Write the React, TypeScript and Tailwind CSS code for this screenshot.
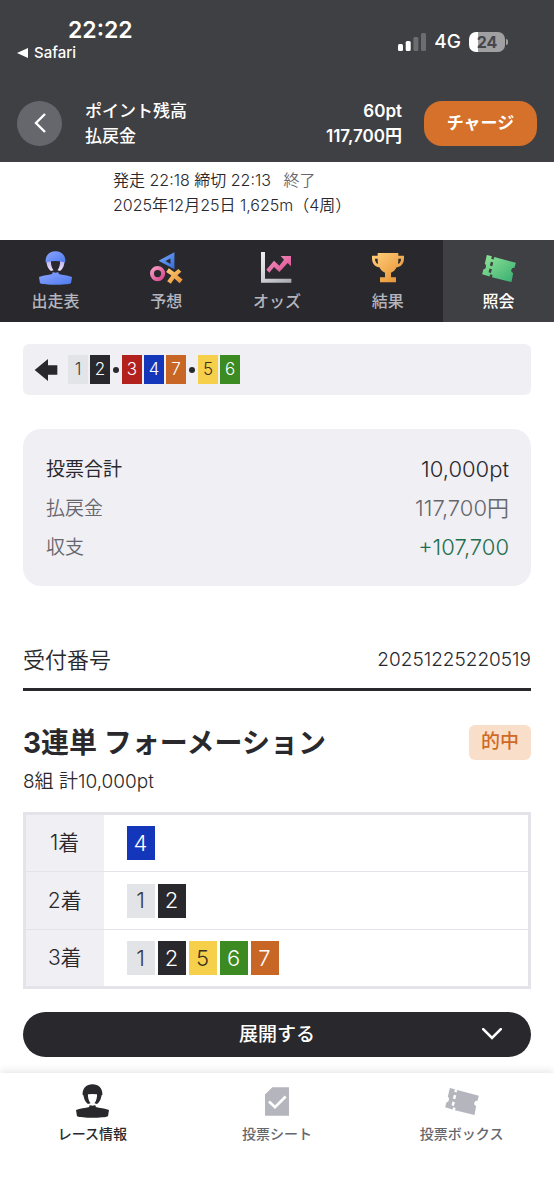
import React from "react";

const tileColors: Record<number, string> = {
  1: "bg-[#e3e4e8] text-[#3a3a3e]",
  2: "bg-[#29292d] text-white",
  3: "bg-[#b3211f] text-white",
  4: "bg-[#1436bb] text-white",
  5: "bg-[#f7d04b] text-[#3a3020]",
  6: "bg-[#3b8a22] text-white",
  7: "bg-[#c86626] text-white",
};

function Tile({ n, large }: { n: number; large?: boolean }) {
  const size = large ? "w-7 h-[34px] text-[22px]" : "w-5 h-[29px] text-[17px]";
  return (
    <span className={`flex items-center justify-center font-[350] ${size} ${tileColors[n]}`}>{n}</span>
  );
}

function Dot() {
  return <span className="mx-px size-1.5 rounded-full bg-[#29292d]" />;
}

function RiderIcon({ fill }: { fill: string }) {
  return (
    <svg viewBox="0 0 100 102" className="h-[34px] w-[33px]" aria-hidden="true">
      <path
        d="M22 28c1 14 5 25 14 32l8-2c-6-8-8-17-8-30zM78 28c-1 14-5 25-14 32l-8-2c6-8 8-17 8-30z"
        fill={fill === "url(#rider)" ? "url(#strap)" : fill}
      />
      <path d="M20 32C19 12 32 0 50 0s31 12 30 32c-1 2-4 2-6 1-16-4-32-4-48 0-2 1-5 1-6-1z" fill={fill} />
      <path d="M0 78c12-4 28-6 40-9 0-3 1-5 3-5 5 2 9 2 14 0 2 0 3 2 3 5 12 3 28 5 40 9l-3 19c-12 6-82 6-94 0z" fill={fill} />
    </svg>
  );
}

function TicketIcon({ fill }: { fill: string }) {
  return (
    <svg viewBox="0 0 100 80" className="h-[27px] w-[34px]" aria-hidden="true">
      <path
        d="M14 0l15 4-2 7 7 2 2-7 64 17-4 15a6 6 0 0 0-4 15l-5 27-58-14 2-7-7-2-2 7L0 57l4-15c8 1 10-13 4-16zM26 20l-3 11 7 2 3-11zM22 40l-3 11 7 2 3-11z"
        fillRule="evenodd"
        fill={fill}
      />
    </svg>
  );
}

function PredictIcon() {
  return (
    <svg viewBox="0 0 100 96" className="h-8 w-[33px]" aria-hidden="true">
      <path d="M74 0v52L26 26zM62 19L47 27l15 9z" fillRule="evenodd" fill="url(#tri)" />
      <circle cx="23" cy="65" r="17" fill="none" stroke="url(#pink)" strokeWidth="12" />
      <path
        d="M86 51l9 8-12 11 16 13-9 11-16-14-11 16-11-8 13-17-16-11 8-11 17 12z"
        fill="url(#gold)"
      />
    </svg>
  );
}

function OddsIcon() {
  return (
    <svg viewBox="0 0 93 96" className="h-8 w-[31px]" aria-hidden="true">
      <path d="M0 0h12v80h79v12H0z" fill="url(#silver)" />
      <path d="M59 12h31v31l-10-10-25 27-16-15-14 17-9-9 23-27 16 15 14-18z" fill="url(#pink)" />
    </svg>
  );
}

function TrophyIcon() {
  return (
    <svg viewBox="0 0 96 90" className="h-[30px] w-8" aria-hidden="true">
      <path
        d="M17 0h62v8h17v8c0 15-7 25-22 27-4 8-10 14-17 16v14h15v15H24V73h15V59c-7-2-13-8-17-16C7 41 0 31 0 16V8h17zM17 17H9c0 8 3 13 9 16-1-5-1-10-1-16zM79 17c0 6 0 11-1 16 6-3 9-8 9-16z"
        fillRule="evenodd"
        fill="url(#gold)"
      />
    </svg>
  );
}

function SheetIcon() {
  return (
    <svg viewBox="0 0 72 86" className="h-[29px] w-6" aria-hidden="true">
      <path d="M22 0h50v86H0V22z" fill="#b5b5be" />
      <path d="M12 43l18 17 32-32" fill="none" stroke="#fff" strokeWidth="8" />
    </svg>
  );
}

function Gradients() {
  return (
    <svg className="absolute size-0" aria-hidden="true">
      <defs>
        <linearGradient id="rider" x1="0" y1="0" x2="1" y2="1">
          <stop offset="0" stopColor="#8ea5ff" />
          <stop offset="1" stopColor="#4d7bee" />
        </linearGradient>
        <linearGradient id="strap" x1="0" y1="0" x2="0" y2="1">
          <stop offset="0" stopColor="#b9aef2" />
          <stop offset="1" stopColor="#efe3fb" />
        </linearGradient>
        <linearGradient id="tri" x1="0" y1="0" x2="1" y2="1">
          <stop offset="0" stopColor="#7daeff" />
          <stop offset="1" stopColor="#3169d8" />
        </linearGradient>
        <linearGradient id="pink" x1="0" y1="0" x2="1" y2="1">
          <stop offset="0" stopColor="#f69ac4" />
          <stop offset="1" stopColor="#d84a8d" />
        </linearGradient>
        <linearGradient id="gold" x1="0" y1="0" x2="1" y2="1">
          <stop offset="0" stopColor="#ffd07c" />
          <stop offset="1" stopColor="#e58d2f" />
        </linearGradient>
        <linearGradient id="silver" x1="0" y1="0" x2="1" y2="1">
          <stop offset="0" stopColor="#f1f1f4" />
          <stop offset="1" stopColor="#a9a9b2" />
        </linearGradient>
        <linearGradient id="green" x1="0" y1="0" x2="1" y2="1">
          <stop offset="0" stopColor="#94e596" />
          <stop offset="1" stopColor="#35ad72" />
        </linearGradient>
      </defs>
    </svg>
  );
}

const tabs = [
  { label: "出走表", icon: <RiderIcon fill="url(#rider)" /> },
  { label: "予想", icon: <PredictIcon /> },
  { label: "オッズ", icon: <OddsIcon /> },
  { label: "結果", icon: <TrophyIcon /> },
  { label: "照会", icon: <TicketIcon fill="url(#green)" />, active: true },
];

const formation = [
  { place: "1着", picks: [4] },
  { place: "2着", picks: [1, 2] },
  { place: "3着", picks: [1, 2, 5, 6, 7] },
];

const navItems = [
  { label: "レース情報", icon: <RiderIcon fill="#29292d" />, active: true },
  { label: "投票シート", icon: <SheetIcon /> },
  { label: "投票ボックス", icon: <TicketIcon fill="#b5b5be" /> },
];

function StatusBar() {
  return (
    <div className="flex h-[84px] items-start justify-between pt-[18px] pr-[46px] pl-[17px]">
      <div className="flex flex-col">
        <span className="pl-[51px] text-[23px] leading-[25px] font-semibold">22:22</span>
        <a href="#safari" className="flex items-center gap-1.5 text-[15px] leading-5 font-medium">
          <svg viewBox="0 0 11 10" className="h-2.5 w-[11px]" aria-hidden="true">
            <path d="M0 5L11 0v10z" fill="#fff" />
          </svg>
          Safari
        </a>
      </div>
      <div className="flex h-12 items-center">
        <svg viewBox="0 0 28 18" className="h-[18px] w-7" aria-hidden="true">
          <rect x="0" y="11" width="5" height="7" rx="1.5" fill="#fff" />
          <rect x="7.7" y="8" width="5" height="10" rx="1.5" fill="#fff" />
          <rect x="15.4" y="4" width="5" height="14" rx="1.5" fill="#6c6d71" />
          <rect x="23" y="0" width="5" height="18" rx="1.5" fill="#6c6d71" />
        </svg>
        <span className="ml-2 text-[19px] leading-6 font-medium">4G</span>
        <div className="ml-2 flex items-center gap-px">
          <div className="flex h-5 w-9 items-center justify-center rounded-[7px] bg-linear-to-r from-white from-25% to-[#a0a0a3] to-25% text-base font-bold text-[#45464a]">
            24
          </div>
          <span className="h-1.5 w-0.5 rounded-r-full bg-[#a0a0a3]" />
        </div>
      </div>
    </div>
  );
}

export default function App() {
  return (
    <div className="flex min-h-screen flex-col bg-white font-['Inter','Noto_Sans_CJK_JP',sans-serif] text-[#29292d]">
      <Gradients />
      <header className="bg-[#3f4044] text-white">
        <StatusBar />
        <div className="flex h-[78px] items-center px-[17px]">
          <button
            type="button"
            aria-label="戻る"
            className="flex size-[45px] items-center justify-center rounded-full bg-[#66676d]"
          >
            <svg viewBox="0 0 12 20" className="h-5 w-3" aria-hidden="true">
              <path d="M11 1L2 10l9 9" fill="none" stroke="#fff" strokeWidth="2.4" />
            </svg>
          </button>
          <dl className="ml-[23px] flex flex-1 flex-col pt-0.5 text-[17px] leading-[25px]">
            <div className="flex justify-between">
              <dt className="font-medium">ポイント残高</dt>
              <dd className="font-semibold">60pt</dd>
            </div>
            <div className="flex justify-between">
              <dt className="font-medium">払戻金</dt>
              <dd className="font-semibold">117,700円</dd>
            </div>
          </dl>
          <button
            type="button"
            className="ml-[22px] h-[45px] w-[113px] rounded-[18px] bg-[#d5712b] pt-0.5 text-[17px] font-bold"
          >
            チャージ
          </button>
        </div>
      </header>

      <section className="h-[78px] pt-1.5 pl-[113px] text-base leading-[25px] font-[350]">
        <p>
          発走 22:18 締切 22:13 <span className="ml-2 text-[#66676d]">終了</span>
        </p>
        <p>2025年12月25日 1,625m（4周）</p>
      </section>

      <nav className="grid h-[82px] grid-cols-5 bg-[#29292d]">
        {tabs.map((t) => (
          <a
            key={t.label}
            href="#tab"
            aria-current={t.active ? "page" : undefined}
            className={`flex flex-col items-center pt-2.5 text-base leading-6 font-medium ${
              t.active ? "bg-[#3f4044] text-white" : "text-[#b5b5be]"
            }`}
          >
            <span className="flex h-9 items-center">{t.icon}</span>
            <span className="mt-[3px]">{t.label}</span>
          </a>
        ))}
      </nav>

      <main className="flex flex-col px-[23px] pt-[22px] pb-4">
        <div className="flex h-[51px] items-center gap-0.5 rounded-md bg-[#f0eff4] pl-[11px]">
          <svg viewBox="0 0 68 66" className="mr-2 h-[22px] w-6" aria-hidden="true">
            <path d="M0 33L40 0v19h28v28H40v19z" fill="#29292d" />
          </svg>
          <Tile n={1} />
          <Tile n={2} />
          <Dot />
          <Tile n={3} />
          <Tile n={4} />
          <Tile n={7} />
          <Dot />
          <Tile n={5} />
          <Tile n={6} />
        </div>

        <dl className="mt-[34px] rounded-[18px] bg-[#f0eff4] pt-[21px] pr-[22px] pb-[19px] pl-[23px] text-[22px] font-[350]">
          <div className="flex justify-between leading-[39px]">
            <dt className="text-[19px] leading-[39px] font-normal">投票合計</dt>
            <dd>10,000pt</dd>
          </div>
          <div className="flex justify-between leading-[39px] text-[#66676d]">
            <dt className="text-[19px] leading-[39px]">払戻金</dt>
            <dd>117,700円</dd>
          </div>
          <div className="flex justify-between leading-[39px]">
            <dt className="text-[19px] leading-[39px] text-[#66676d]">収支</dt>
            <dd className="text-[#1f6e4e]">+107,700</dd>
          </div>
        </dl>

        <div className="mt-[54px] flex h-[51px] items-center justify-between border-b-3 border-[#29292d] pb-2 font-[350]">
          <span className="text-[22px]">受付番号</span>
          <span className="text-[19px]">20251225220519</span>
        </div>

        <div className="mt-8 flex items-center justify-between">
          <h1 className="pt-0.5 text-[28px] leading-9 font-bold">3連単 フォーメーション</h1>
          <span className="flex h-[35px] w-[62px] items-center justify-center rounded-md bg-[#f9dfca] text-[19px] font-medium text-[#cf6a26]">
            的中
          </span>
        </div>
        <p className="mt-[7px] text-[19px] leading-7 font-[350]">8組 計10,000pt</p>

        <table className="mt-4 w-full border-collapse border-3 border-[#e3e3e9]">
          <tbody>
            {formation.map((row) => (
              <tr key={row.place} className="h-[58px] border-t border-[#e3e3e9]">
                <th scope="row" className="w-[79px] bg-[#f0eff4] text-center text-[21px] font-[350]">
                  {row.place}
                </th>
                <td className="pl-[23px]">
                  <div className="flex gap-[3px]">
                    {row.picks.map((n) => (
                      <Tile key={n} n={n} large />
                    ))}
                  </div>
                </td>
              </tr>
            ))}
          </tbody>
        </table>

        <button
          type="button"
          className="relative mt-[23px] h-[45px] w-full rounded-full bg-[#29292d] pt-0.5 text-[19px] font-medium text-white"
        >
          展開する
          <svg viewBox="0 0 20 12" className="absolute top-4 right-[29px] h-3 w-5" aria-hidden="true">
            <path d="M1.2 1.2L10 10l8.8-8.8" fill="none" stroke="#fff" strokeWidth="2.6" strokeLinecap="round" />
          </svg>
        </button>
      </main>

      <nav className="grid flex-1 grid-cols-3 items-start bg-white pb-14 shadow-[0_-2px_8px_rgba(0,0,0,0.1)]">
        {navItems.map((item) => (
          <a
            key={item.label}
            href="#nav"
            aria-current={item.active ? "page" : undefined}
            className={`flex flex-col items-center pt-2.5 text-sm leading-5 font-medium ${
              item.active ? "text-[#29292d]" : "text-[#66676d]"
            }`}
          >
            <span className="flex h-9 items-center">{item.icon}</span>
            <span className="mt-[5px]">{item.label}</span>
          </a>
        ))}
      </nav>
    </div>
  );
}
